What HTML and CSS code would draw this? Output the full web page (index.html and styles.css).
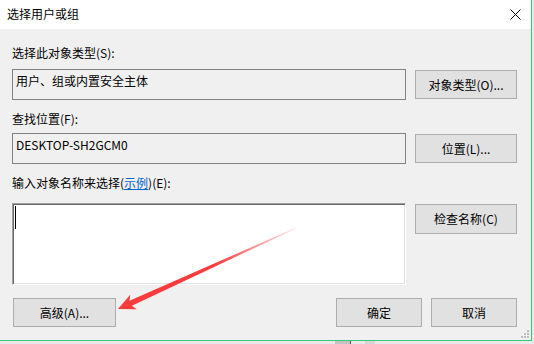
FILE: index.html
```html
<!DOCTYPE html>
<html lang="zh-CN">
<head>
  <meta charset="UTF-8" />
  <meta name="viewport" content="width=device-width, initial-scale=1" />
  <title>选择用户或组</title>
  <link rel="stylesheet" href="styles.css">
</head>
<body>
  <div class="window">
    <!-- Title bar -->
    <div class="titlebar">
      <span class="title">选择用户或组</span>
      <svg class="close" width="11" height="11" viewBox="0 0 11 11">
        <path d="M0.5 0.5 L10.5 10.5 M10.5 0.5 L0.5 10.5" stroke="#000" stroke-width="1" fill="none" />
      </svg>
    </div>

    <div class="content">
      <div class="label">选择此对象类型(S):</div>
      <div class="row">
        <div class="field">用户、组或内置安全主体</div>
        <button class="btn">对象类型(O)...</button>
      </div>

      <div class="label second">查找位置(F):</div>
      <div class="row row-tight">
        <div class="field">DESKTOP-SH2GCM0</div>
        <button class="btn">位置(L)...</button>
      </div>

      <div class="label second">输入对象名称来选择(<span class="link">示例</span>)(E):</div>
      <div class="row row-wide">
        <div class="names"><span class="caret"></span></div>
        <button class="btn">检查名称(C)</button>
      </div>

      <div class="footer">
        <button class="btn advanced">高级(A)...</button>
        <div class="actions">
          <button class="btn small">确定</button>
          <button class="btn small">取消</button>
        </div>
      </div>
    </div>

    <!-- resize grip -->
    <svg class="grip" width="9" height="8" viewBox="0 0 9 8">
      <rect x="7" y="0" width="2" height="2" fill="#bdbdbd" />
      <rect x="4" y="3" width="2" height="2" fill="#bdbdbd" />
      <rect x="7" y="3" width="2" height="2" fill="#bdbdbd" />
      <rect x="1" y="6" width="2" height="2" fill="#bdbdbd" />
      <rect x="4" y="6" width="2" height="2" fill="#bdbdbd" />
      <rect x="7" y="6" width="2" height="2" fill="#bdbdbd" />
    </svg>

    <!-- red annotation arrow -->
    <svg class="arrow" width="531" height="340" viewBox="0 0 531 340">
      <defs>
        <linearGradient id="fade" gradientUnits="userSpaceOnUse" x1="296" y1="228" x2="215" y2="265">
          <stop offset="0" stop-color="#fb3c3c" stop-opacity="0.1" />
          <stop offset="1" stop-color="#fb3c3c" stop-opacity="1" />
        </linearGradient>
      </defs>
      <polygon fill="url(#fade)"
        points="118,309 136.8,309.3 131.9,305.7 296.1,228.4 295.9,227.6 129.5,300.7 130.2,294.7" />
    </svg>
  </div>

  <div class="taskbar">
    <span class="tb-a"></span>
    <span class="tb-b"></span>
  </div>
</body>
</html>
```

FILE: styles.css
```css
html, body {
  margin: 0;
  padding: 0;
}

body {
  width: 534px;
  height: 344px;
  overflow: hidden;
  background: #e9e9e9;
  font-family: "Noto Sans CJK SC", "Noto Sans", sans-serif;
  font-size: 12px;
  color: #000;
}

.window {
  position: relative;
  width: 531px;
  height: 340px;
  border-right: 1px solid #35c97a;
  border-bottom: 1px solid #35c97a;
  background: #f0f0f0;
  display: flex;
  flex-direction: column;
}

.titlebar {
  height: 29px;
  background: #fff;
  display: flex;
  align-items: center;
  justify-content: space-between;
  padding: 0 10px 0 7px;
  flex-shrink: 0;
}

.title {
  line-height: 16px;
  margin-top: -1px;
}

.close {
  display: block;
  margin-top: -1px;
}

.content {
  padding: 16px 14px 0 12px;
}

.label {
  line-height: 16px;
  height: 16px;
  white-space: nowrap;
}

.label.second {
  margin-top: 11px;
}

.link {
  color: #0066cc;
  text-decoration: underline;
}

.row {
  display: grid;
  grid-template-columns: 394px 102px;
  column-gap: 9px;
  align-items: start;
  margin-top: 8px;
}

.row-tight {
  margin-top: 6px;
}

.row-wide {
  margin-top: 12px;
}

.field {
  box-sizing: border-box;
  height: 31px;
  border: 1px solid #828282;
  padding: 3px 3px;
  line-height: 16px;
  white-space: nowrap;
}

.names {
  box-sizing: border-box;
  height: 82px;
  background: #fff;
  border: 1px solid;
  border-color: #a0a0a0 #fff #fff #a0a0a0;
  box-shadow: inset 1px 1px 0 #696969, inset -1px -1px 0 #e3e3e3;
  padding: 2px 0 0 2px;
}

.caret {
  display: block;
  width: 1px;
  height: 23px;
  background: #000;
}

.btn {
  box-sizing: border-box;
  height: 29px;
  margin-top: 1px;
  padding: 0;
  background: #e1e1e1;
  border: 1px solid #adadad;
  font-family: inherit;
  font-size: 12px;
  color: #000;
  line-height: 16px;
}

.row-wide .btn {
  height: 30px;
}

.footer {
  display: flex;
  justify-content: space-between;
  margin-top: 13px;
  padding-left: 1px;
}

.footer .btn {
  margin-top: 0;
}

.advanced {
  width: 103px;
}

.actions {
  display: flex;
  gap: 9px;
}

.small {
  width: 86px;
}

.grip {
  position: absolute;
  right: 2px;
  bottom: 2px;
}

.arrow {
  position: absolute;
  left: 0;
  top: 0;
  pointer-events: none;
}

.taskbar {
  display: flex;
  height: 3px;
}

.tb-a {
  margin-left: 335px;
  width: 15px;
  background: #c4c4c4;
  border-right: 1px solid #555;
}

.tb-b {
  margin-left: 14px;
  width: 10px;
  background: #d6d6d6;
}
```
